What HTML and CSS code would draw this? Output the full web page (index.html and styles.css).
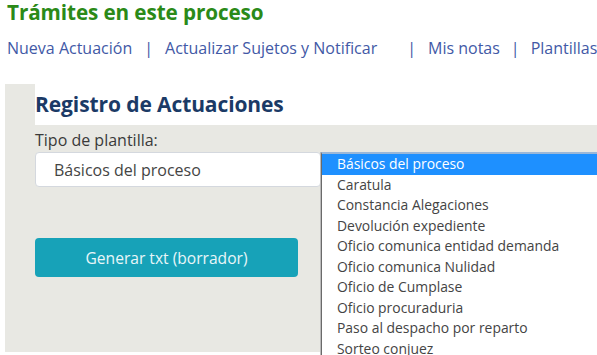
FILE: index.html
```html
<!DOCTYPE html>
<html lang="es">
<head>
    <meta charset="UTF-8">
    <meta name="viewport" content="width=device-width, initial-scale=1.0">
    <title>Trámites en este proceso</title>
    <link rel="stylesheet" href="styles.css">
</head>
<body>
    <h1 class="title">Trámites en este proceso</h1>

    <nav class="links">
        <a href="#">Nueva Actuación</a>
        <span class="sep">|</span>
        <a href="#">Actualizar Sujetos y Notificar</a>
        <span class="sep wide">|</span>
        <a href="#">Mis notas</a>
        <span class="sep last">|</span>
        <a href="#">Plantillas</a>
    </nav>

    <div class="panel">
        <h2 class="panel-title">Registro de Actuaciones</h2>
        <div class="panel-body">
            <label class="field-label">Tipo de plantilla:</label>
            <div class="select">Básicos del proceso</div>
            <button class="btn-info">Generar txt (borrador)</button>
        </div>

        <ul class="options">
            <li class="selected">Básicos del proceso</li>
            <li>Caratula</li>
            <li>Constancia Alegaciones</li>
            <li>Devolución expediente</li>
            <li>Oficio comunica entidad demanda</li>
            <li>Oficio comunica Nulidad</li>
            <li>Oficio de Cumplase</li>
            <li>Oficio procuraduria</li>
            <li>Paso al despacho por reparto</li>
            <li>Sorteo conjuez</li>
        </ul>
    </div>
</body>
</html>
```

FILE: styles.css
```css
:root {
    --panel: #e8e8e3;
    --green: #2b8a18;
    --link: #4259a6;
    --navy: #1b3a66;
    --info: #17a2b8;
    --highlight: #1e90ff;
}

* {
    margin: 0;
    padding: 0;
    box-sizing: border-box;
    font-family: 'Open Sans', 'Noto Sans', sans-serif;
}

html, body {
    overflow: hidden;
}

body {
    background: #fff;
    color: #333;
    width: 597px;
    height: 355px;
}

.title {
    font-size: 20.7px;
    font-weight: 700;
    color: var(--green);
    padding-left: 7px;
    line-height: 24px;
    letter-spacing: -0.1px;
}

.links {
    display: flex;
    padding: 13px 0 0 7px;
    font-size: 16px;
    line-height: 22px;
    white-space: nowrap;
}

.links a {
    color: var(--link);
    text-decoration: none;
}

.sep {
    color: var(--link);
    padding: 0 12px;
}

.sep.wide {
    padding-left: 30px;
}

.sep.last {
    padding: 0 11px;
}

.panel {
    position: relative;
    margin: 25px 0 0 5px;
    height: 268px;
    background: var(--panel);
    padding-left: 30px;
}

.panel-title {
    background: #fff;
    color: var(--navy);
    font-size: 21px;
    font-weight: 700;
    height: 41px;
    line-height: 41px;
    letter-spacing: -0.1px;
}

.panel-body {
    width: 286px;
}

.field-label {
    display: block;
    font-size: 16px;
    line-height: 20px;
    padding-top: 5px;
    color: #3a3a3a;
}

.select {
    margin-top: 2px;
    height: 35px;
    background: #fff;
    border: 1px solid #d4d8de;
    border-radius: 4px;
    padding: 1px 0 0 18px;
    line-height: 32px;
    font-size: 16px;
    color: #444;
}

.btn-info {
    display: block;
    margin-top: 51px;
    width: 263px;
    height: 39px;
    border: none;
    border-radius: 4px;
    background: var(--info);
    color: #e9f6f8;
    font-size: 15.6px;
}

.options {
    position: absolute;
    top: 68px;
    left: 316px;
    width: 290px;
    list-style: none;
    background: #fff;
    border-left: 1px solid #6a6a6a;
    border-top: 2px solid #9ab7d8;
    box-shadow: -1px 0 0 #bbb;
}

.options li {
    height: 20.5px;
    line-height: 20px;
    padding-left: 15px;
    font-size: 13.9px;
    color: #444;
    white-space: nowrap;
}

.options li.selected {
    background: var(--highlight);
    color: #fff;
}
```
